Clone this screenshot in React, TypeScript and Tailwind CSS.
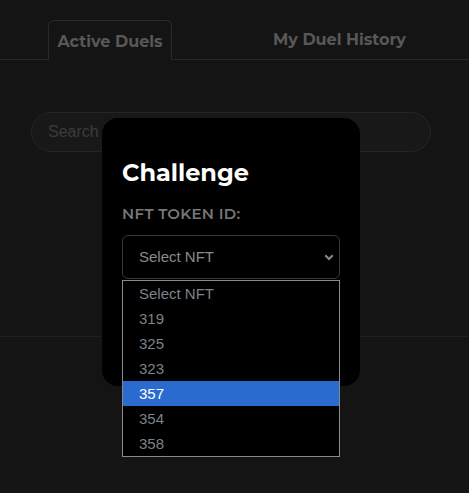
import React from "react";

const options = ["Select NFT", "319", "325", "323", "357", "354", "358"];

export default function App() {
  return (
    <div className="relative h-[493px] w-[469px] overflow-hidden bg-[#141414]">
      {/* tabs */}
      <div className="flex h-[60px] items-end border-b border-[#262626] font-['Montserrat',Inter,'Noto_Sans',sans-serif] text-[16px] font-bold text-[#585858]">
        <div className="relative -mb-px ml-[48px] flex h-[40px] w-[124px] items-center justify-center rounded-t-[6px] border border-b-0 border-[#2a2a2a] bg-[#141414] pt-[2px]">
          Active Duels
        </div>
        <div className="ml-[101px] flex h-[40px] items-center pt-[2px]">My Duel History</div>
      </div>

      {/* search */}
      <div className="px-[31px] pt-[52px]">
        <div className="flex h-[40px] w-[400px] items-center rounded-full border border-[#252525] bg-[#181818] pl-[16px] font-['Liberation_Sans',Arial,sans-serif] text-[16px] text-[#3c3c3c]">
          Search
        </div>
      </div>

      <div className="mt-[184px] border-b border-[#1f1f1f]" />

      {/* modal */}
      <div className="absolute left-[102px] top-[118px] h-[268px] w-[258px] rounded-[16px] bg-black px-[20px] pt-[40px]">
        <div className="font-['Montserrat',Inter,'Noto_Sans',sans-serif] text-[24px] font-bold leading-[30px] text-white">
          Challenge
        </div>
        <div className="mt-[17px] font-['Montserrat',Inter,'Noto_Sans',sans-serif] text-[15px] font-semibold leading-[18px] tracking-[0.3px] text-[#777]">
          NFT TOKEN ID:
        </div>
        <div className="mt-[12px] flex h-[44px] items-center justify-between rounded-[6px] border border-[#383838] pl-[16px] pr-[5px] font-['Liberation_Sans',Arial,sans-serif] text-[15px] text-[#8a8a8a]">
          <span>Select NFT</span>
          <svg width="10" height="8" viewBox="0 0 10 8" fill="none">
            <path d="M1.3 2.3 L5 6 L8.7 2.3" stroke="#8a8a8a" strokeWidth="2" />
          </svg>
        </div>
      </div>

      {/* open dropdown */}
      <div className="absolute left-[122px] top-[280px] w-[218px] border border-[#8a8a8a] bg-black font-['Liberation_Sans',Arial,sans-serif] text-[15px]">
        {options.map((o) => (
          <div
            key={o}
            className={
              o === "357"
                ? "flex h-[25px] items-center bg-[#2a6bd0] pl-[16px] pt-px text-white"
                : "flex h-[25px] items-center pl-[16px] pt-px text-[#7b8289]"
            }
          >
            {o}
          </div>
        ))}
      </div>
    </div>
  );
}
